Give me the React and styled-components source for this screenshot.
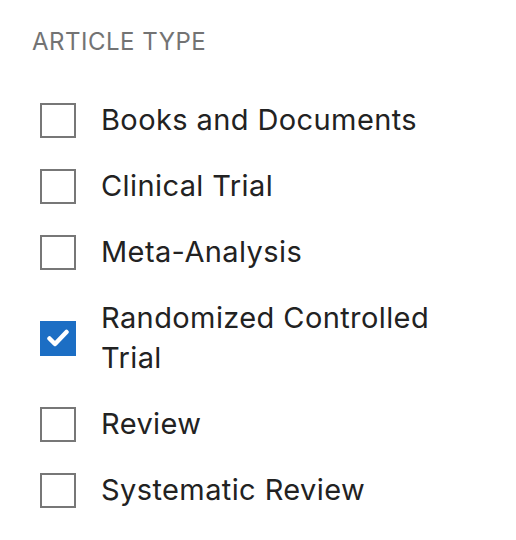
import React from 'react'
import styled, { createGlobalStyle } from 'styled-components'

const Global = createGlobalStyle`
    body {
        margin: 0;
        background: #fff;
        font-family: Inter, "Liberation Sans", sans-serif;
    }
`
const Panel = styled.section`
    width: 516px;
    padding: 28px 32px;
    box-sizing: border-box;
`
const Heading = styled.h3`
    margin: 0;
    font-size: 24px;
    line-height: 28px;
    font-weight: 400;
    letter-spacing: 0.5px;
    color: #737373;
    text-transform: uppercase;
`
const List = styled.ul`
    list-style: none;
    margin: 44px 0 0;
    padding: 0 0 0 8px;
    display: flex;
    flex-direction: column;
    gap: 26px;
`
const Item = styled.li`
    display: flex;
    align-items: center;
    gap: 25px;
`
const Box = styled.span`
    flex: none;
    width: 36px;
    height: 35px;
    box-sizing: border-box;
    border: 2px solid ${props => props.checked ? '#1c6ec4' : '#777'};
    background: ${props => props.checked ? '#1c6ec4' : '#fff'};
    display: flex;
    align-items: center;
    justify-content: center;
`
const Label = styled.span`
    font-size: 29px;
    line-height: 40px;
    letter-spacing: 0.4px;
    color: #222;
    max-width: 350px;
`

const types = [
    { name: 'Books and Documents' },
    { name: 'Clinical Trial' },
    { name: 'Meta-Analysis' },
    { name: 'Randomized Controlled Trial', checked: true },
    { name: 'Review' },
    { name: 'Systematic Review' },
]

export default function App() {
    return (
        <Panel>
            <Global />
            <Heading>Article type</Heading>
            <List>
                {types.map(t =>
                    <Item key={t.name}>
                        <Box checked={t.checked}>
                            {t.checked &&
                                <svg width="24" height="18" viewBox="0 0 24 18">
                                    <path d="M3.5 9.5 L9 15 L20.5 3" fill="none" stroke="#fff" strokeWidth="4.5" strokeLinecap="round" strokeLinejoin="round" />
                                </svg>
                            }
                        </Box>
                        <Label>{t.name}</Label>
                    </Item>
                )}
            </List>
        </Panel>
    )
}
